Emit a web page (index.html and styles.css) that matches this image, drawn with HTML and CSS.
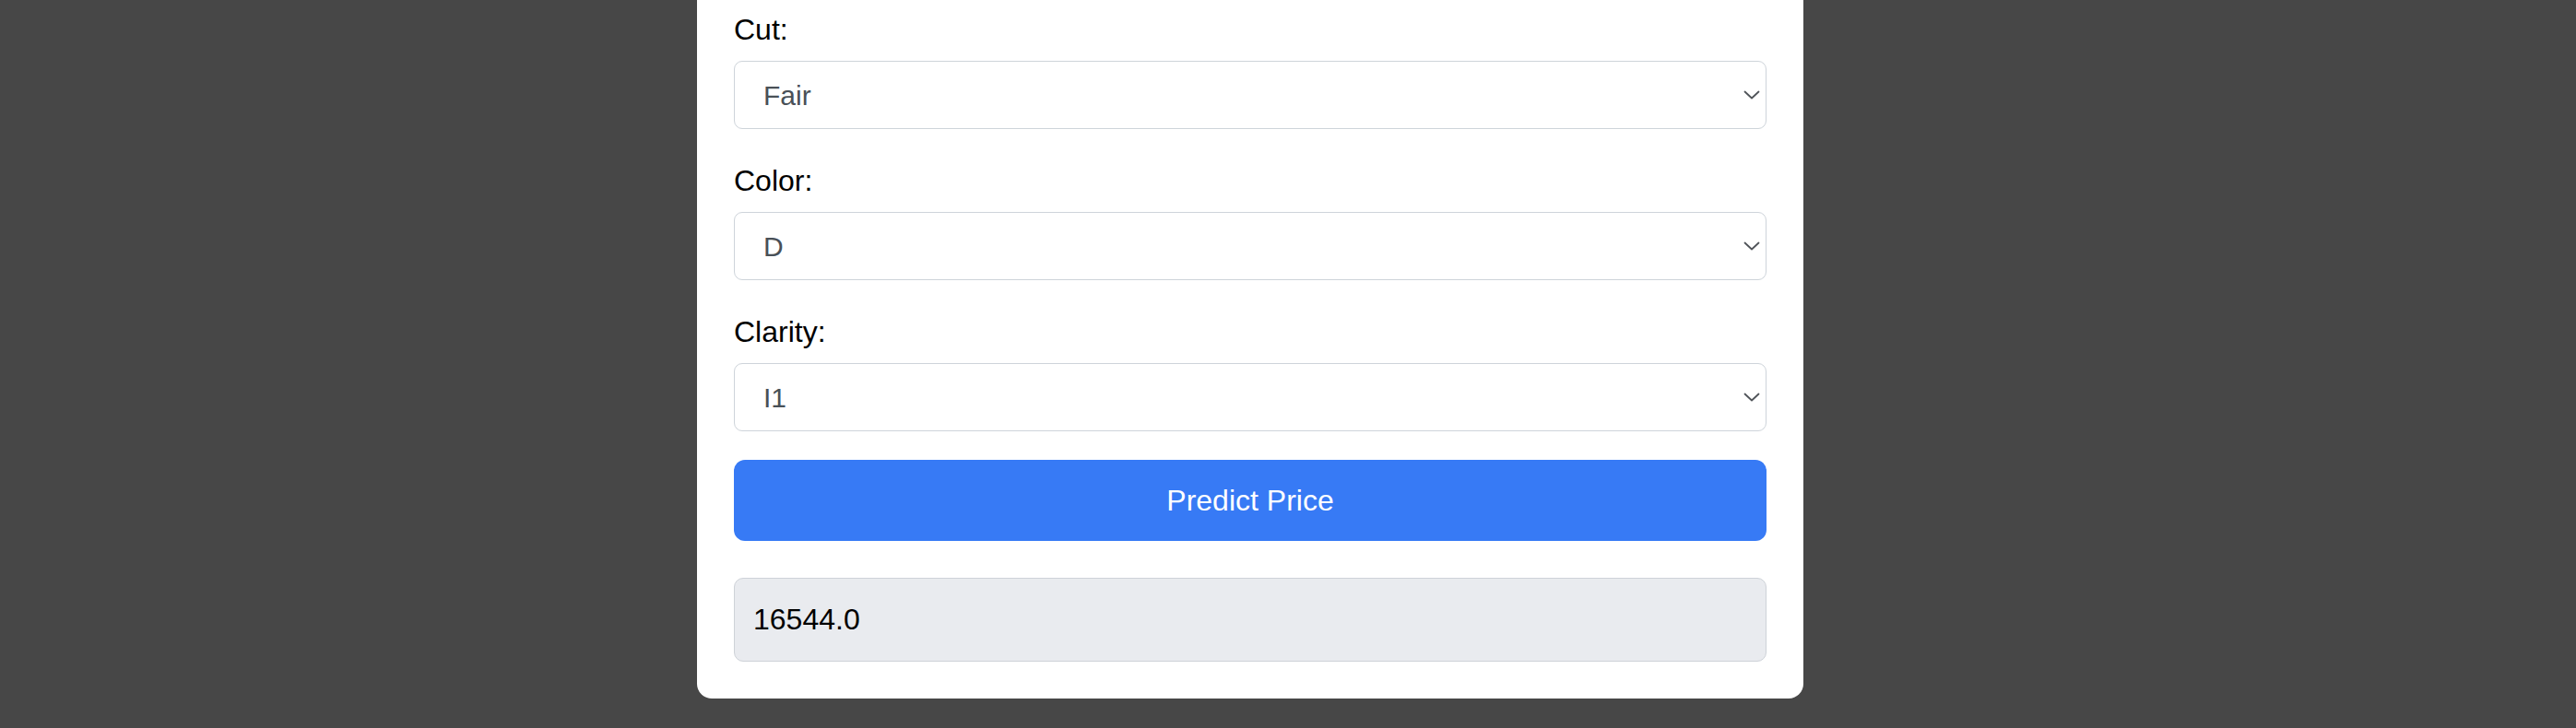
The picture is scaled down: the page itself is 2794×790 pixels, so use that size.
FILE: index.html
```html
<!DOCTYPE html>
<html lang="en">
<head>
<meta charset="utf-8">
<title>Diamond Price Predictor</title>
<link rel="stylesheet" href="styles.css">
</head>
<body>
<div class="page">
  <form class="card">
    <div class="field">
      <label class="label" for="cut">Cut:</label>
      <div class="select-wrap">
        <select class="select" id="cut">
          <option>Fair</option>
          <option>Good</option>
          <option>Very Good</option>
          <option>Premium</option>
          <option>Ideal</option>
        </select>
        <svg class="chevron" width="18" height="10" viewBox="0 0 18 10" aria-hidden="true"><path d="M1.5 1.5 L9 8.5 L16.5 1.5" fill="none" stroke="currentColor" stroke-width="1.8" stroke-linecap="round" stroke-linejoin="round"/></svg>
      </div>
    </div>
    <div class="field">
      <label class="label" for="color">Color:</label>
      <div class="select-wrap">
        <select class="select" id="color">
          <option>D</option>
          <option>E</option>
          <option>F</option>
          <option>G</option>
          <option>H</option>
          <option>I</option>
          <option>J</option>
        </select>
        <svg class="chevron" width="18" height="10" viewBox="0 0 18 10" aria-hidden="true"><path d="M1.5 1.5 L9 8.5 L16.5 1.5" fill="none" stroke="currentColor" stroke-width="1.8" stroke-linecap="round" stroke-linejoin="round"/></svg>
      </div>
    </div>
    <div class="field">
      <label class="label" for="clarity">Clarity:</label>
      <div class="select-wrap">
        <select class="select" id="clarity">
          <option>I1</option>
          <option>SI2</option>
          <option>SI1</option>
          <option>VS2</option>
          <option>VS1</option>
          <option>VVS2</option>
          <option>VVS1</option>
          <option>IF</option>
        </select>
        <svg class="chevron" width="18" height="10" viewBox="0 0 18 10" aria-hidden="true"><path d="M1.5 1.5 L9 8.5 L16.5 1.5" fill="none" stroke="currentColor" stroke-width="1.8" stroke-linecap="round" stroke-linejoin="round"/></svg>
      </div>
    </div>
    <button type="button" class="btn">Predict Price</button>
    <div class="result">16544.0</div>
  </form>
</div>
</body>
</html>
```

FILE: styles.css
```css
html, body {
  margin: 0;
  padding: 0;
  height: 100%;
}

body {
  background: #474747;
  font-family: "Liberation Sans", Arial, Helvetica, sans-serif;
  overflow: hidden;
}

.page {
  display: flex;
  padding-left: 756px;
}

.card {
  width: 1200px;
  box-sizing: border-box;
  background: #ffffff;
  border-radius: 0 0 16px 16px;
  padding: 8px 40px 40px;
  display: flex;
  flex-direction: column;
}

.field {
  display: flex;
  flex-direction: column;
}

.field + .field {
  margin-top: 32px;
}

.label {
  font-size: 32px;
  line-height: 48px;
  color: #000000;
  margin-bottom: 10px;
}

.select-wrap {
  position: relative;
  height: 74px;
}

.select {
  -webkit-appearance: none;
  appearance: none;
  width: 100%;
  height: 74px;
  box-sizing: border-box;
  margin: 0;
  padding: 0 60px 0 31px;
  border: 1px solid #ced4da;
  border-radius: 9px;
  background: #ffffff;
  font-family: "Liberation Sans", Arial, Helvetica, sans-serif;
  font-size: 30px;
  color: #495057;
  outline: none;
}

.chevron {
  position: absolute;
  right: 7px;
  top: 50%;
  transform: translateY(-50%);
  color: #505459;
  pointer-events: none;
}

.btn {
  margin-top: 31px;
  height: 88px;
  width: 100%;
  border: none;
  border-radius: 12px;
  background: #377af5;
  color: #ffffff;
  font-family: "Liberation Sans", Arial, Helvetica, sans-serif;
  font-size: 32px;
  padding: 0;
  cursor: pointer;
}

.result {
  margin-top: 40px;
  height: 91px;
  box-sizing: border-box;
  display: flex;
  align-items: center;
  padding: 0 20px;
  background: #e9ebef;
  border: 1px solid #ced2d8;
  border-radius: 10px;
  font-size: 32px;
  color: #000000;
}
```
